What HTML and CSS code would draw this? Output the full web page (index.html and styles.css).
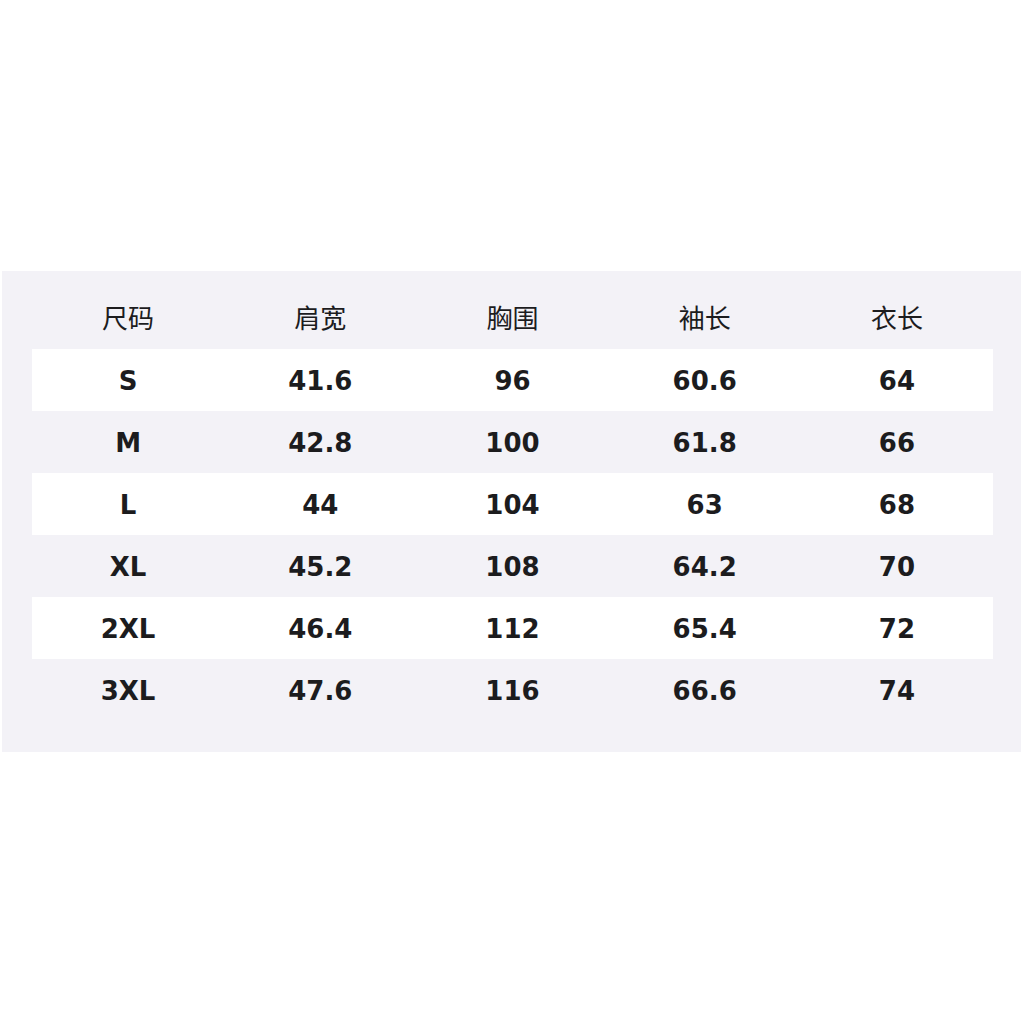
FILE: index.html
```html
<!DOCTYPE html>
<html lang="zh">
<head>
<meta charset="utf-8">
<link rel="stylesheet" href="styles.css">
</head>
<body>
<div class="panel">
  <div class="row head">
    <div>尺码</div><div>肩宽</div><div>胸围</div><div>袖长</div><div>衣长</div>
  </div>
  <div class="row w"><div>S</div><div>41.6</div><div>96</div><div>60.6</div><div>64</div></div>
  <div class="row"><div>M</div><div>42.8</div><div>100</div><div>61.8</div><div>66</div></div>
  <div class="row w"><div>L</div><div>44</div><div>104</div><div>63</div><div>68</div></div>
  <div class="row"><div>XL</div><div>45.2</div><div>108</div><div>64.2</div><div>70</div></div>
  <div class="row w"><div>2XL</div><div>46.4</div><div>112</div><div>65.4</div><div>72</div></div>
  <div class="row"><div>3XL</div><div>47.6</div><div>116</div><div>66.6</div><div>74</div></div>
</div>
</body>
</html>
```
FILE: styles.css
```css
html, body {
  margin: 0;
  padding: 0;
  background: #ffffff;
}
body {
  padding-top: 271px;
  padding-left: 2px;
}
.panel {
  width: 1019px;
  background: #f3f2f7;
  padding: 0 28px 31px 30px;
  box-sizing: border-box;
}
.row {
  display: grid;
  grid-template-columns: repeat(5, 1fr);
  height: 62px;
  align-items: center;
  text-align: center;
  font-family: "DejaVu Sans", sans-serif;
  font-weight: bold;
  font-size: 26px;
  color: #1c1c1e;
}
.row > div {
  padding-top: 2px;
}
.row.w {
  background: #ffffff;
}
.row.head {
  height: 78px;
  font-family: "Noto Sans CJK SC", sans-serif;
  font-weight: normal;
  font-size: 26px;
  padding-top: 12px;
  box-sizing: border-box;
}
.row.head > div {
  padding-top: 0;
}
```
